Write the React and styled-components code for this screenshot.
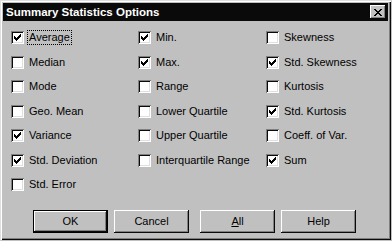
import React from "react";
import styled, { createGlobalStyle } from "styled-components";

const GlobalStyle = createGlobalStyle`
  html, body {
    margin: 0;
    padding: 0;
    background: #c0c0c0;
  }
  body {
    font-family: "Liberation Sans", Arial, sans-serif;
    font-size: 11px;
    color: #000;
  }
`;

const options = [
  ["Average", true, true],
  ["Min.", true],
  ["Skewness", false],
  ["Median", false],
  ["Max.", true],
  ["Std. Skewness", true],
  ["Mode", false],
  ["Range", false],
  ["Kurtosis", false],
  ["Geo. Mean", false],
  ["Lower Quartile", false],
  ["Std. Kurtosis", true],
  ["Variance", true],
  ["Upper Quartile", false],
  ["Coeff. of Var.", false],
  ["Std. Deviation", true],
  ["Interquartile Range", false],
  ["Sum", true],
  ["Std. Error", false],
];

function CheckMark() {
  return (
    <svg width="7" height="7" viewBox="0 0 7 7" shapeRendering="crispEdges">
      <path
        fill="#000"
        d="M6 0h1v3h-1zM5 1h1v3h-1zM4 2h1v3h-1zM3 3h1v3h-1zM2 4h1v3h-1zM1 3h1v3h-1zM0 2h1v3h-1z"
      />
    </svg>
  );
}

function CloseGlyph() {
  return (
    <svg width="8" height="7" viewBox="0 0 8 7" shapeRendering="crispEdges">
      <path
        fill="#000"
        d="M0 0h2v1h-2zM6 0h2v1h-2zM1 1h2v1h-2zM5 1h2v1h-2zM2 2h4v1h-4zM3 3h2v1h-2zM2 4h4v1h-4zM1 5h2v1h-2zM5 5h2v1h-2zM0 6h2v1h-2zM6 6h2v1h-2z"
      />
    </svg>
  );
}

export default function App() {
  return (
    <>
      <GlobalStyle />
      <Window>
        <TitleBar>
          <Title>Summary Statistics Options</Title>
          <CloseButton>
            <CloseGlyph />
          </CloseButton>
        </TitleBar>
        <Body>
          <Grid>
            {options.map(([label, checked, focused]) => (
              <Option key={label}>
                <Box>{checked && <CheckMark />}</Box>
                <Label $focused={focused}>{label}</Label>
              </Option>
            ))}
          </Grid>
          <Buttons>
            <Button $default>OK</Button>
            <Button>Cancel</Button>
            <Button $gap={11}>
              <u>A</u>ll
            </Button>
            <Button>Help</Button>
          </Buttons>
        </Body>
      </Window>
    </>
  );
}

const Window = styled.div`
  box-sizing: border-box;
  width: 392px;
  height: 241px;
  background: #c0c0c0;
  border: 1px solid;
  border-color: #dfdfdf #c0c0c0 #c0c0c0 #dfdfdf;
  box-shadow: inset 1px 1px #fff, inset -1px -1px #0a0a0a,
    inset -2px -2px #808080;
  padding: 2px 3px 0 2px;
  overflow: hidden;
`;

const TitleBar = styled.div`
  height: 18px;
  background: #0a0a0a;
  display: flex;
  align-items: center;
  justify-content: space-between;
  padding: 0 2px 0 3px;
`;

const Title = styled.span`
  color: #fff;
  font-weight: bold;
  font-size: 11.5px;
`;

const CloseButton = styled.div`
  box-sizing: border-box;
  width: 16px;
  height: 14px;
  background: #c0c0c0;
  display: flex;
  align-items: center;
  justify-content: center;
  box-shadow: inset -1px -1px #0a0a0a, inset 1px 1px #fff,
    inset -2px -2px #808080;
`;

const Body = styled.div`
  padding: 10px 0 0 8px;
`;

const Grid = styled.div`
  display: grid;
  grid-template-columns: 127px 128px 1fr;
  grid-auto-rows: 24.5px;
`;

const Option = styled.div`
  display: flex;
  align-items: flex-start;
  gap: 4px;
`;

const Box = styled.div`
  box-sizing: border-box;
  width: 13px;
  height: 13px;
  flex: none;
  background: #fff;
  padding: 3px;
  display: flex;
  box-shadow: inset 1px 1px #808080, inset -1px -1px #fff,
    inset 2px 2px #0a0a0a, inset -2px -2px #dfdfdf;
`;

const Label = styled.span`
  line-height: 13px;
  padding: 0 1px;
  outline: ${(p) => (p.$focused ? "1px dotted #000" : "none")};
  outline-offset: 0;
`;

const Buttons = styled.div`
  display: flex;
  padding: 7px 0 0 22px;
`;

const Button = styled.div`
  box-sizing: border-box;
  width: 75px;
  height: 23px;
  margin-left: ${(p) => (p.$gap ? p.$gap : 6)}px;
  &:first-child {
    margin-left: 0;
  }
  display: flex;
  align-items: center;
  justify-content: center;
  font-size: 11px;
  background: #c0c0c0;
  border: ${(p) => (p.$default ? "1px solid #000" : "none")};
  box-shadow: inset -1px -1px #0a0a0a, inset 1px 1px #fff,
    inset -2px -2px #808080;
`;
